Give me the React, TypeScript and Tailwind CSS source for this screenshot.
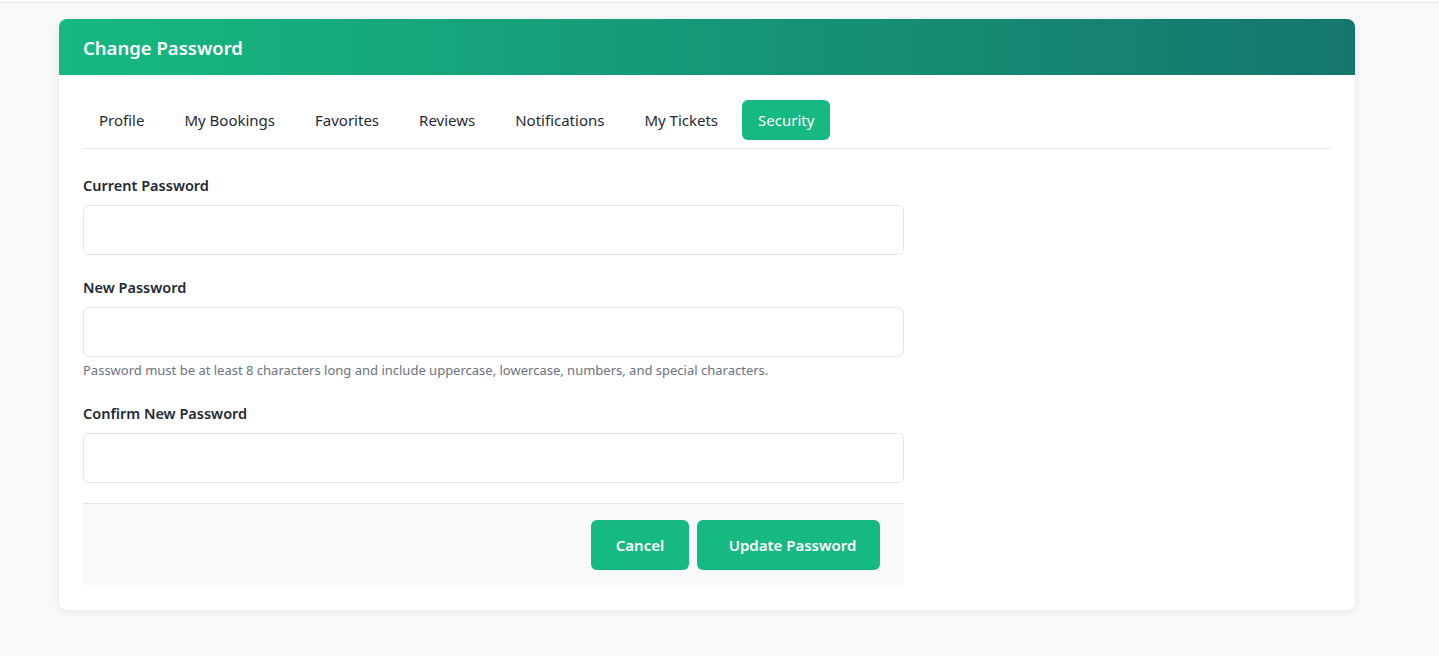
const tabs = ["Profile", "My Bookings", "Favorites", "Reviews", "Notifications", "My Tickets", "Security"]

function Field({ label, help }: { label: string; help?: string }) {
  return (
    <div>
      <label className="block text-[14.5px] leading-6 font-semibold text-[#1f2937] mb-2">{label}</label>
      <input
        type="password"
        className="block w-full h-[50px] rounded-md border border-[#e2e5ec] bg-white px-3 outline-none"
      />
      {help && <p className="mt-[3px] mb-px text-[13px] leading-5 text-[#6b7280]">{help}</p>}
    </div>
  )
}

export default function App() {
  return (
    <div className="min-h-screen bg-[#f8f9fb] font-['Noto_Sans',sans-serif]">
      <div className="h-[3px] bg-white border-b border-[#e2e5ec]" />
      <div className="pt-4 pb-12 pl-[59px] pr-[84px]">
        <div className="bg-white rounded-lg shadow-[0_2px_8px_rgba(0,0,0,0.08)] overflow-hidden">
          <div className="h-14 flex items-center px-6 pt-0.5 bg-gradient-to-r from-[#16b981] to-[#15766c]">
            <h1 className="text-white text-[18.5px] font-semibold">Change Password</h1>
          </div>
          <div className="px-6 pt-[25px] pb-[25px]">
            <div className="flex gap-2 pb-2 border-b border-[#e2e5ec]">
              {tabs.map((t) => (
                <button
                  key={t}
                  className={
                    t === "Security"
                      ? "h-10 px-4 rounded-md bg-[#16b981] text-white text-[15px]"
                      : "h-10 px-4 rounded-md text-[#1f2937] text-[15px]"
                  }
                >
                  {t}
                </button>
              ))}
            </div>
            <div className="w-[821px] mt-6 flex flex-col gap-5">
              <Field label="Current Password" />
              <Field
                label="New Password"
                help="Password must be at least 8 characters long and include uppercase, lowercase, numbers, and special characters."
              />
              <Field label="Confirm New Password" />
              <div className="border-t border-[#e2e5ec] bg-[#f8f9fa] px-6 pt-4 pb-[15px] flex justify-end gap-2">
                <button className="h-[50px] w-[98px] rounded-md bg-[#16b981] text-white text-[15px] font-semibold">
                  Cancel
                </button>
                <button className="h-[50px] w-[183px] pl-2 rounded-md bg-[#16b981] text-white text-[15px] font-semibold">
                  Update Password
                </button>
              </div>
            </div>
          </div>
        </div>
      </div>
    </div>
  )
}
